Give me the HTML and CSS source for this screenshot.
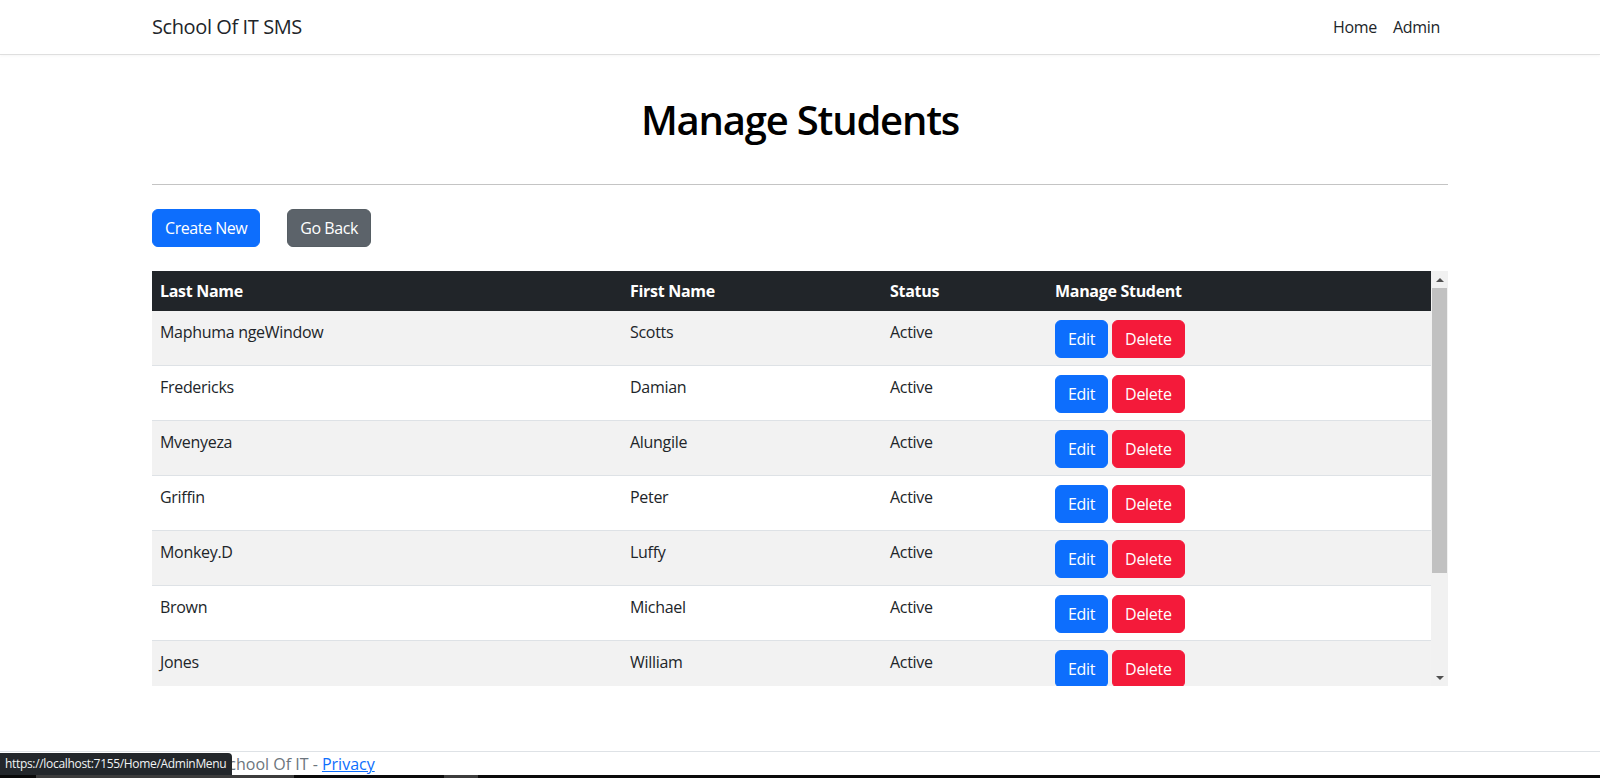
FILE: index.html
```html
<!DOCTYPE html>
<html lang="en">
<head>
<meta charset="utf-8">
<title>Manage Students - School Of IT SMS</title>
<link rel="stylesheet" href="styles.css">
</head>
<body>
<div class="page">
  <header class="navbar">
    <div class="container nav-inner">
      <a class="brand" href="#">School Of IT SMS</a>
      <nav class="nav-links">
        <a class="nav-link" href="#">Home</a>
        <a class="nav-link" href="#">Admin</a>
      </nav>
    </div>
  </header>

  <main class="container main">
    <h1 class="page-title">Manage Students</h1>
    <hr class="divider">
    <div class="actions">
      <a class="btn btn-primary" href="#">Create New</a>
      <a class="btn btn-secondary" href="#">Go Back</a>
    </div>
    <div class="table-frame">
      <div class="table-scroll">
        <table class="students">
          <colgroup>
            <col class="col-last">
            <col class="col-first">
            <col class="col-status">
            <col class="col-manage">
          </colgroup>
          <thead>
            <tr><th>Last Name</th><th>First Name</th><th>Status</th><th>Manage Student</th></tr>
          </thead>
          <tbody>
            <tr><td>Maphuma ngeWindow</td><td>Scotts</td><td>Active</td><td><a class="btn btn-primary" href="#">Edit</a> <a class="btn btn-danger" href="#">Delete</a></td></tr>
            <tr><td>Fredericks</td><td>Damian</td><td>Active</td><td><a class="btn btn-primary" href="#">Edit</a> <a class="btn btn-danger" href="#">Delete</a></td></tr>
            <tr><td>Mvenyeza</td><td>Alungile</td><td>Active</td><td><a class="btn btn-primary" href="#">Edit</a> <a class="btn btn-danger" href="#">Delete</a></td></tr>
            <tr><td>Griffin</td><td>Peter</td><td>Active</td><td><a class="btn btn-primary" href="#">Edit</a> <a class="btn btn-danger" href="#">Delete</a></td></tr>
            <tr><td>Monkey.D</td><td>Luffy</td><td>Active</td><td><a class="btn btn-primary" href="#">Edit</a> <a class="btn btn-danger" href="#">Delete</a></td></tr>
            <tr><td>Brown</td><td>Michael</td><td>Active</td><td><a class="btn btn-primary" href="#">Edit</a> <a class="btn btn-danger" href="#">Delete</a></td></tr>
            <tr><td>Jones</td><td>William</td><td>Active</td><td><a class="btn btn-primary" href="#">Edit</a> <a class="btn btn-danger" href="#">Delete</a></td></tr>
          </tbody>
        </table>
      </div>
      <div class="vscroll" aria-hidden="true">
        <span class="vscroll-btn"><span class="arrow-up"></span></span>
        <span class="vscroll-thumb"></span>
        <span class="vscroll-btn vscroll-btn-end"><span class="arrow-down"></span></span>
      </div>
    </div>
  </main>

  <footer class="footer">
    <div class="container">&copy; 2023 - School Of IT - <a class="footer-link" href="#">Privacy</a></div>
  </footer>
</div>

<div class="status-tip">https://localhost:7155/Home/AdminMenu</div>
<div class="bottom-strip"><span class="strip-seg"></span><span class="strip-seg strip-seg-small"></span></div>
</body>
</html>
```

FILE: styles.css
```css
* { box-sizing: border-box; }

html, body {
  margin: 0;
  padding: 0;
}

body {
  font-family: "Segoe UI", "Open Sans", "Noto Sans", sans-serif;
  font-size: 16px;
  line-height: 24px;
  letter-spacing: -0.3px;
  color: #212529;
  background: #fff;
}

.page {
  min-height: 100vh;
  display: flex;
  flex-direction: column;
}

.container {
  width: 100%;
  max-width: 1320px;
  margin: 0 auto;
  padding: 0 12px;
}

/* Navbar */
.navbar {
  height: 55px;
  border-bottom: 1px solid #dfdfdf;
  box-shadow: 0 1px 3px rgba(0, 0, 0, 0.04);
  background: #fff;
}

.nav-inner {
  height: 54px;
  display: flex;
  align-items: center;
  justify-content: space-between;
}

.brand {
  font-size: 20px;
  line-height: 30px;
  letter-spacing: -0.4px;
  color: #212529;
  text-decoration: none;
}

.nav-links {
  display: flex;
}

.nav-link {
  padding: 8px;
  color: #212529;
  text-decoration: none;
  font-size: 16px;
  line-height: 24px;
}

/* Main */
.main {
  flex: 0 0 auto;
}

.page-title {
  margin: 0;
  padding-top: 41px;
  font-size: 40px;
  line-height: 48px;
  font-weight: 600;
  letter-spacing: -1.2px;
  text-align: center;
  color: #000;
}

.divider {
  margin: 40px 0 0;
  border: 0;
  border-top: 1px solid #c4c4c4;
  height: 0;
}

.actions {
  margin-top: 24px;
  display: flex;
  gap: 27px;
}

.btn {
  display: inline-block;
  padding: 6px 12px;
  font-size: 16px;
  line-height: 24px;
  border: 1px solid transparent;
  border-radius: 6px;
  color: #fff;
  text-decoration: none;
  vertical-align: top;
}

.actions .btn {
  letter-spacing: -0.45px;
}

.btn-primary { background: #0d6efd; border-color: #0d6efd; }
.btn-secondary { background: #5c636a; border-color: #565e64; }
.btn-danger { background: #f41a3a; border-color: #f41a3a; }

/* Table with scrollbar */
.table-frame {
  margin-top: 24px;
  height: 415px;
  display: flex;
}

.table-scroll {
  flex: 1 1 auto;
  min-width: 0;
  overflow: hidden;
}

.vscroll {
  flex: 0 0 17px;
  width: 17px;
  background: #f1f1f1;
  display: flex;
  flex-direction: column;
}

.vscroll-btn {
  flex: 0 0 17px;
  height: 17px;
  display: flex;
  align-items: center;
  justify-content: center;
}

.vscroll-btn-end {
  margin-top: auto;
}

.arrow-up {
  width: 0;
  height: 0;
  border-left: 4px solid transparent;
  border-right: 4px solid transparent;
  border-bottom: 4px solid #505050;
}

.arrow-down {
  width: 0;
  height: 0;
  border-left: 4px solid transparent;
  border-right: 4px solid transparent;
  border-top: 4px solid #505050;
}

.vscroll-thumb {
  flex: 0 0 285px;
  margin: 0 1px;
  background: #c1c1c1;
}

.students {
  width: 100%;
  border-collapse: collapse;
  table-layout: fixed;
}

.col-last { width: 470px; }
.col-first { width: 260px; }
.col-status { width: 165px; }
.col-manage { width: auto; }

.students th,
.students td {
  padding: 8px;
  text-align: left;
  vertical-align: top;
}

.students td {
  padding-top: 9px;
  padding-bottom: 7px;
}

.students th {
  background: #212529;
  color: #fff;
  font-weight: 700;
  height: 40px;
}

.students td {
  border-bottom: 1px solid #dee2e6;
}

.students tbody tr:nth-child(odd) td {
  background: #f2f2f2;
}

/* Footer */
.footer {
  margin-top: auto;
  height: 27px;
  border-top: 1px solid #dee2e6;
  color: #6c757d;
  letter-spacing: 0;
  white-space: nowrap;
}

.footer-link {
  color: #0d6efd;
  text-decoration: underline;
}

/* Browser status tooltip overlay */
.status-tip {
  position: fixed;
  left: 0;
  bottom: 3px;
  width: 232px;
  height: 22px;
  padding: 0 0 0 5px;
  background: #23272b;
  color: #f1f3f4;
  font-size: 12px;
  line-height: 22px;
  letter-spacing: -0.32px;
  border-top-right-radius: 4px;
  white-space: nowrap;
  overflow: hidden;
}

.bottom-strip {
  position: fixed;
  left: 0;
  right: 0;
  bottom: 0;
  height: 3px;
  background: #0a0a0a;
  display: flex;
}

.strip-seg {
  margin-left: 36px;
  width: 258px;
  background: #3c3c3c;
}

.strip-seg-small {
  margin-left: 150px;
  width: 34px;
}
```
